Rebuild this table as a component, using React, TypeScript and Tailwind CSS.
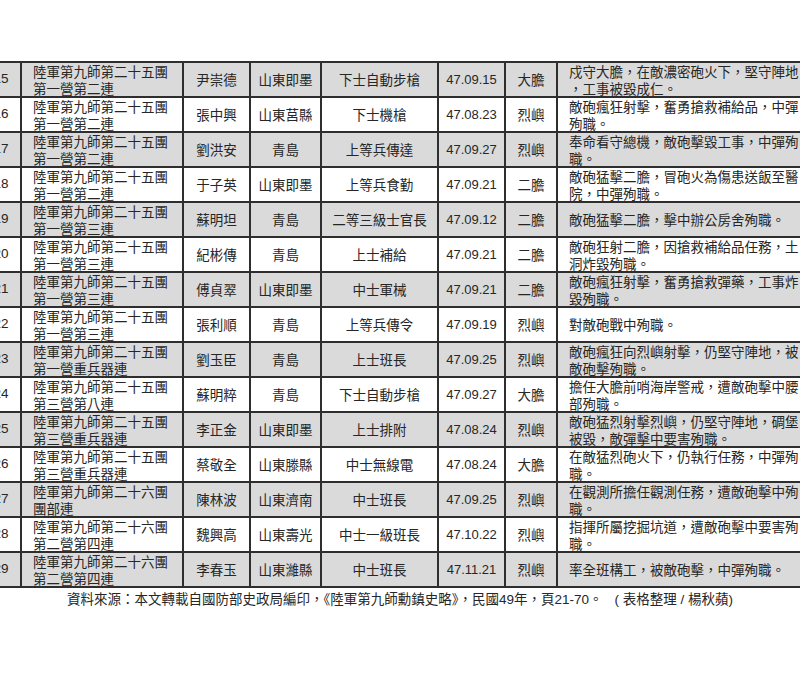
type Row = {
  no: number;
  unit: [string, string];
  name: string;
  home: string;
  rank: string;
  date: string;
  place: string;
  note: string[];
};

const rows: Row[] = [
  { no: 15, unit: ["陸軍第九師第二十五團", "第一營第二連"], name: "尹崇德", home: "山東即墨", rank: "下士自動步槍", date: "47.09.15", place: "大膽", note: ["戍守大膽，在敵濃密砲火下，堅守陣地", "，工事被毀成仁。"] },
  { no: 16, unit: ["陸軍第九師第二十五團", "第一營第二連"], name: "張中興", home: "山東莒縣", rank: "下士機槍", date: "47.08.23", place: "烈嶼", note: ["敵砲瘋狂射擊，奮勇搶救補給品，中彈", "殉職。"] },
  { no: 17, unit: ["陸軍第九師第二十五團", "第一營第二連"], name: "劉洪安", home: "青島", rank: "上等兵傳達", date: "47.09.27", place: "烈嶼", note: ["奉命看守總機，敵砲擊毀工事，中彈殉", "職。"] },
  { no: 18, unit: ["陸軍第九師第二十五團", "第一營第二連"], name: "于子英", home: "山東即墨", rank: "上等兵食勤", date: "47.09.21", place: "二膽", note: ["敵砲猛擊二膽，冒砲火為傷患送飯至醫", "院，中彈殉職。"] },
  { no: 19, unit: ["陸軍第九師第二十五團", "第一營第三連"], name: "蘇明坦", home: "青島", rank: "二等三級士官長", date: "47.09.12", place: "二膽", note: ["敵砲猛擊二膽，擊中辦公房舍殉職。"] },
  { no: 20, unit: ["陸軍第九師第二十五團", "第一營第三連"], name: "紀彬傳", home: "青島", rank: "上士補給", date: "47.09.21", place: "二膽", note: ["敵砲狂射二膽，因搶救補給品任務，土", "洞炸毀殉職。"] },
  { no: 21, unit: ["陸軍第九師第二十五團", "第一營第三連"], name: "傅貞翠", home: "山東即墨", rank: "中士軍械", date: "47.09.21", place: "二膽", note: ["敵砲瘋狂射擊，奮勇搶救彈藥，工事炸", "毀殉職。"] },
  { no: 22, unit: ["陸軍第九師第二十五團", "第一營第三連"], name: "張利順", home: "青島", rank: "上等兵傳令", date: "47.09.19", place: "烈嶼", note: ["對敵砲戰中殉職。"] },
  { no: 23, unit: ["陸軍第九師第二十五團", "第一營重兵器連"], name: "劉玉臣", home: "青島", rank: "上士班長", date: "47.09.25", place: "烈嶼", note: ["敵砲瘋狂向烈嶼射擊，仍堅守陣地，被", "敵砲擊殉職。"] },
  { no: 24, unit: ["陸軍第九師第二十五團", "第三營第八連"], name: "蘇明粹", home: "青島", rank: "下士自動步槍", date: "47.09.27", place: "大膽", note: ["擔任大膽前哨海岸警戒，遭敵砲擊中腰", "部殉職。"] },
  { no: 25, unit: ["陸軍第九師第二十五團", "第三營重兵器連"], name: "李正金", home: "山東即墨", rank: "上士排附", date: "47.08.24", place: "烈嶼", note: ["敵砲猛烈射擊烈嶼，仍堅守陣地，碉堡", "被毀，敵彈擊中要害殉職。"] },
  { no: 26, unit: ["陸軍第九師第二十五團", "第三營重兵器連"], name: "蔡敬全", home: "山東滕縣", rank: "中士無線電", date: "47.08.24", place: "大膽", note: ["在敵猛烈砲火下，仍執行任務，中彈殉", "職。"] },
  { no: 27, unit: ["陸軍第九師第二十六團", "團部連"], name: "陳林波", home: "山東濟南", rank: "中士班長", date: "47.09.25", place: "烈嶼", note: ["在觀測所擔任觀測任務，遭敵砲擊中殉", "職。"] },
  { no: 28, unit: ["陸軍第九師第二十六團", "第二營第四連"], name: "魏興高", home: "山東壽光", rank: "中士一級班長", date: "47.10.22", place: "烈嶼", note: ["指揮所屬挖掘坑道，遭敵砲擊中要害殉", "職。"] },
  { no: 29, unit: ["陸軍第九師第二十六團", "第二營第四連"], name: "李春玉", home: "山東濰縣", rank: "中士班長", date: "47.11.21", place: "烈嶼", note: ["率全班構工，被敵砲擊，中彈殉職。"] },
];

const cell = "flex items-center border-r-2 border-[#2e2e2e] whitespace-nowrap overflow-hidden";
const latin = "font-['Liberation_Sans',sans-serif]";

export default function App() {
  return (
    <div
      lang="zh-Hant-TW"
      className="h-[680px] w-[800px] overflow-hidden bg-white pt-[61px] font-['Noto_Sans_CJK_TC',sans-serif] text-[13.5px] text-[#262626]"
    >
      <div className="-ml-[18px] w-[900px] border-t-2 border-[#2e2e2e]">
        {rows.map((r, i) => (
          <div
            key={r.no}
            className={`grid h-[35px] grid-cols-[40px_162px_67px_71px_117px_67px_52px_324px] border-b-2 border-[#2e2e2e] ${
              i % 2 === 0 ? "bg-[#dadada]" : "bg-white"
            }`}
          >
            <div className={`${cell} ${latin} justify-center`}>{r.no}</div>
            <div className={`${cell} flex-col !items-start justify-center pl-[11px] leading-[16.5px]`}>
              <span>{r.unit[0]}</span>
              <span>{r.unit[1]}</span>
            </div>
            <div className={`${cell} justify-center`}>{r.name}</div>
            <div className={`${cell} justify-center`}>{r.home}</div>
            <div className={`${cell} justify-center`}>{r.rank}</div>
            <div className={`${cell} ${latin} justify-center text-[13px]`}>{r.date}</div>
            <div className={`${cell} justify-center`}>{r.place}</div>
            <div className={`${cell} flex-col !items-start justify-center pl-[11px] leading-[16.5px]`}>
              {r.note.map((line) => (
                <span key={line}>{line}</span>
              ))}
            </div>
          </div>
        ))}
      </div>
      <p className="text-center leading-[20px] whitespace-nowrap">
        資料來源：本文轉載自國防部史政局編印，《陸軍第九師勳鎮史略》，民國<span className={latin}>49</span>年，頁
        <span className={latin}>21-70</span>。&nbsp;&nbsp;&nbsp;&nbsp;
        <span className={latin}>( </span>表格整理<span className={latin}> / </span>楊秋蘋<span className={latin}>)</span>
      </p>
    </div>
  );
}
